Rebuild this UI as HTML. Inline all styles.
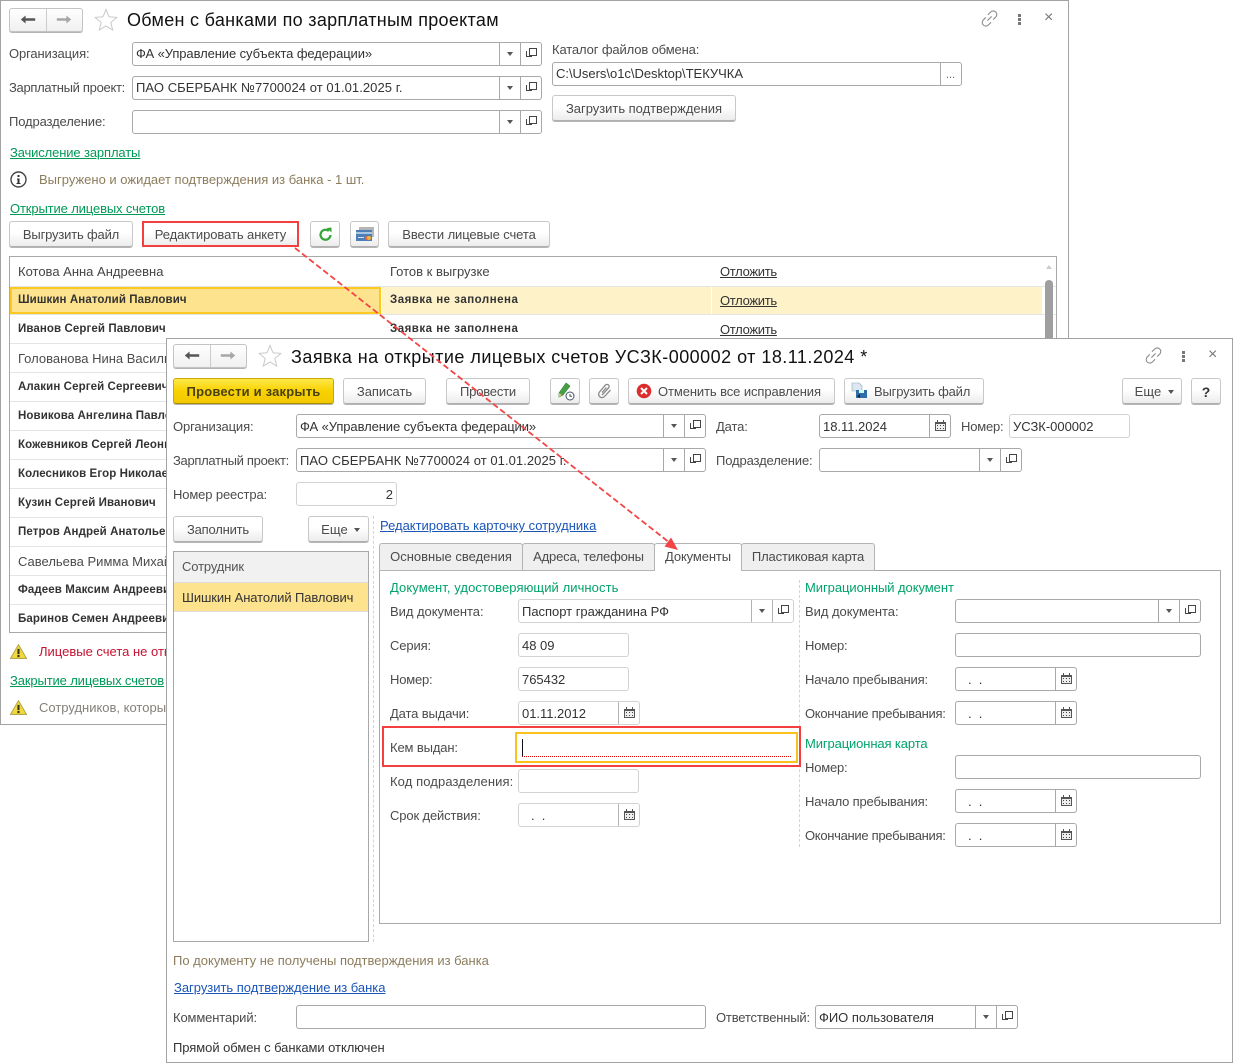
<!DOCTYPE html>
<html lang="ru"><head><meta charset="utf-8"><title>Обмен с банками</title>
<style>
html,body{margin:0;padding:0;background:#fff}
body{position:relative;width:1233px;height:1063px;overflow:hidden;font-family:"Liberation Sans",sans-serif;font-size:13px;letter-spacing:-.13px;color:#4b4b4b}
.w{position:absolute;box-sizing:border-box;background:#fff;border:1px solid #a3a3a3;overflow:hidden}
.t{position:absolute;white-space:nowrap;line-height:16px}
.g{color:#009a57;text-decoration:underline}
.bl{color:#1a55b8;text-decoration:underline;letter-spacing:-.02px}
.h{color:#00a36a;letter-spacing:-.06px}
.br{color:#8c7c5c;letter-spacing:0}
.f{position:absolute;box-sizing:border-box;height:24px;border:1px solid #a8a8a8;border-radius:3px;background:#fff;line-height:22px;padding-left:3px;color:#333;white-space:nowrap;letter-spacing:-.02px}
.w2 .f{line-height:24px}
.f.l{border-color:#d2d2d2}
.d,.o,.c,.e{position:absolute;top:0;bottom:0;width:20px;border-left:1px solid #a8a8a8}
.l .d,.l .o,.l .c{border-color:#b4b4b4}
.d{right:21px}.o{right:0}.c{right:0}.e{right:0;text-align:center;color:#666}
.d:after{content:"";position:absolute;left:7px;top:9px;border:3px solid transparent;border-top:4px solid #555;border-bottom:0}
.o:before{content:"";position:absolute;left:8px;top:5px;width:6px;height:6px;border:1px solid #444;background:#fff;z-index:1}
.o:after{content:"";position:absolute;left:5px;top:8px;width:5px;height:5px;border-left:1px solid #444;border-bottom:1px solid #444}
.c svg{position:absolute;left:5px;top:5px}
.b{position:absolute;box-sizing:border-box;height:26px;border:1px solid #c8c8c8;border-bottom-color:#b0b0b0;border-radius:3px;background:linear-gradient(#fff,#fff 45%,#ececec);box-shadow:0 1px 0 #b5b5b5;text-align:center;line-height:26px;white-space:nowrap;color:#4b4b4b;letter-spacing:-.1px}
.n{position:absolute;box-sizing:border-box;width:74px;height:24px;border:1px solid #c4c4c4;border-radius:3px;background:linear-gradient(#fff,#f0f0f0);box-shadow:0 1px 0 #b5b5b5}
.n i{position:absolute;left:36px;top:0;bottom:0;border-left:1px solid #ccc}
.r{position:absolute;left:0;right:0;height:1px;background:#e4e4e4}
.nm{position:absolute;white-space:nowrap;font-weight:bold;font-size:11.5px;letter-spacing:.1px;color:#333;line-height:16px;margin-top:1px}
.z{letter-spacing:.5px}
.u{color:#333;text-decoration:underline;letter-spacing:-.3px}
.a{position:absolute}
.tab{position:absolute;box-sizing:border-box;height:28px;border:1px solid #b4b4b4;border-radius:3px 3px 0 0;background:#efefef;text-align:center;line-height:26px;white-space:nowrap}
</style></head><body>
<svg width="0" height="0" style="position:absolute"><defs>
<symbol id="cal" viewBox="0 0 11 11"><path d="M0 2h11v9H0z" fill="#555"/><path d="M2 0h1v3H2zM8 0h1v3H8z" fill="#555"/><path d="M1 4h9v6H1z" fill="#eee"/><path d="M2 5h1v1H2zM5 5h1v1H5zM8 5h1v1H8zM2 8h1v1H2zM5 8h1v1H5zM8 8h1v1H8z" fill="#444"/></symbol>
<symbol id="star" viewBox="0 0 24 24"><path d="M12 1.500l3 7.300 7.800.6-6 5.100 1.900 7.600L12 18l-6.700 4.100 1.900-7.600-6-5.100 7.800-.6z" fill="#fff" stroke="#c9c9c9"/></symbol>
<symbol id="la" viewBox="0 0 20 12"><path d="M1 6l6-5v3.500h12v3H7v3.500z" fill="#555"/></symbol>
<symbol id="ra" viewBox="0 0 20 12"><path d="M19 6l-6-5v3.500H1v3h12v3.500z" fill="#a6a6a6"/></symbol>
<symbol id="lnk" viewBox="0 0 16 16"><path d="M6 10l4-4M6.500 4.500l2.500-2.500a3 3 0 0 1 5 4.500l-2.500 2.500M9.500 11.500l-2.500 2.500a3 3 0 0 1-5-4.500l2.500-2.500" fill="none" stroke="#8a8a8a"/></symbol>
<symbol id="warn" viewBox="0 0 16 14"><path d="M8 .5l7.500 13H.5z" fill="#f3d93a" stroke="#b5a850"/><path d="M7 4.500h2v5H7zM7 10.300h2v2H7z" fill="#333"/></symbol>
</defs></svg>

<!-- WINDOW 1 -->
<div class="w" style="left:0;top:0;width:1069px;height:725px">
<div style="position:absolute;left:-1px;top:-1px;width:1069px;height:725px">
<div class="n" style="left:9px;top:8px"><i></i><svg class="a" style="left:10px;top:5px" width="16" height="11"><use href="#la"/></svg><svg class="a" style="left:46px;top:5px" width="16" height="11"><use href="#ra"/></svg></div>
<svg class="a" style="left:94px;top:8px" width="24" height="24"><use href="#star"/></svg>
<div class="t" style="left:127px;top:10px;font-size:18px;line-height:20px;color:#111;letter-spacing:.3px">Обмен с банками по зарплатным проектам</div>
<svg class="a" style="left:981px;top:10px" width="17" height="17"><use href="#lnk"/></svg>
<div class="a" style="left:1018px;top:14px;width:3px;height:3px;background:#777;box-shadow:0 4px 0 #777,0 8px 0 #777"></div>
<div class="t" style="left:1044px;top:10px;font-size:16px;color:#777;letter-spacing:0">×</div>

<div class="t" style="left:9px;top:46px">Организация:</div>
<div class="f" style="left:132px;top:42px;width:410px;letter-spacing:-.09px">ФА «Управление субъекта федерации»<i class="d"></i><i class="o"></i></div>
<div class="t" style="left:9px;top:80px;letter-spacing:-.3px">Зарплатный проект:</div>
<div class="f" style="left:132px;top:76px;width:410px;letter-spacing:.06px">ПАО СБЕРБАНК №7700024 от 01.01.2025 г.<i class="d"></i><i class="o"></i></div>
<div class="t" style="left:9px;top:114px">Подразделение:</div>
<div class="f" style="left:132px;top:110px;width:410px"><i class="d"></i><i class="o"></i></div>

<div class="t" style="left:552px;top:42px">Каталог файлов обмена:</div>
<div class="f" style="left:552px;top:62px;width:410px">C:\Users\o1c\Desktop\ТЕКУЧКА<i class="e" style="line-height:24px;font-size:11px;letter-spacing:0">...</i></div>
<div class="b" style="left:552px;top:95px;width:184px;letter-spacing:-.03px">Загрузить подтверждения</div>

<div class="t g" style="left:10px;top:145px">Зачисление зарплаты</div>
<svg class="a" style="left:10px;top:171px" width="17" height="17"><circle cx="8.500" cy="8.500" r="7.500" fill="#fff" stroke="#444" stroke-width="1.400"/><path d="M7.500 4h2v2h-2zM7 7.500h2.500v4.500h1v1h-4v-1h1v-3.500h-.5z" fill="#333"/></svg>
<div class="t br" style="left:39px;top:172px">Выгружено и ожидает подтверждения из банка - 1 шт.</div>
<div class="t g" style="left:10px;top:201px">Открытие лицевых счетов</div>

<div class="b" style="left:9px;top:221px;width:124px;letter-spacing:-.18px">Выгрузить файл</div>
<div class="b" style="left:142px;top:221px;width:157px;border:2px solid #f33f3f;border-radius:0;box-shadow:none;line-height:23px;letter-spacing:-.08px">Редактировать анкету</div>
<div class="b" style="left:310px;top:221px;width:30px"><svg class="a" style="left:7px;top:5px" width="15" height="15" viewBox="0 0 15 15"><path d="M12.500 8a5 5 0 1 1-1.700-4" fill="none" stroke="#35a53a" stroke-width="2.200"/><path d="M8.500 1l5-.5v5z" fill="#35a53a"/></svg></div>
<div class="b" style="left:350px;top:221px;width:29px"><svg class="a" style="left:5px;top:5px" width="18" height="15" viewBox="0 0 18 15"><path d="M3 0h15v10H3z" fill="#b5b5b5"/><path d="M0 3h16v11H0z" fill="#4c7fb5"/><path d="M0 5h16v2H0z" fill="#a9c6e3"/><path d="M2 10h6v1H2z" fill="#dde"/><circle cx="11" cy="11" r="2" fill="#e8623a"/><circle cx="13" cy="11" r="2" fill="#f2b33a"/></svg></div>
<div class="b" style="left:388px;top:221px;width:162px">Ввести лицевые счета</div>

<!-- table -->
<div class="a" style="left:9px;top:256px;width:1048px;height:377px;box-sizing:border-box;border:1px solid #a8a8a8;overflow:hidden;background:#fff">
<div style="position:absolute;left:-10px;top:-257px;width:1060px;height:640px">
<div class="r" style="top:286px"></div><div class="r" style="top:314px"></div><div class="r" style="top:343px"></div><div class="r" style="top:372px"></div><div class="r" style="top:401px"></div><div class="r" style="top:430px"></div><div class="r" style="top:459px"></div><div class="r" style="top:488px"></div><div class="r" style="top:517px"></div><div class="r" style="top:546px"></div><div class="r" style="top:575px"></div><div class="r" style="top:604px"></div>
<div class="a" style="left:382px;top:287px;width:660px;height:27px;background:#fef2c8"></div>
<div class="a" style="left:711px;top:287px;width:1px;height:27px;background:#fff"></div>
<div class="a" style="left:10px;top:287px;width:371px;height:27px;box-sizing:border-box;background:#fde38d;border:2px solid #fdc91f"></div>
<div class="t" style="left:18px;top:264px;color:#444;letter-spacing:0">Котова Анна Андреевна</div>
<div class="t" style="left:390px;top:264px;color:#444;letter-spacing:0">Готов к выгрузке</div>
<div class="t u" style="left:720px;top:264px">Отложить</div>
<div class="nm" style="left:18px;top:291px">Шишкин Анатолий Павлович</div>
<div class="nm z" style="left:390px;top:291px">Заявка не заполнена</div>
<div class="t u" style="left:720px;top:293px">Отложить</div>
<div class="nm" style="left:18px;top:320px">Иванов Сергей Павлович</div>
<div class="nm z" style="left:390px;top:320px">Заявка не заполнена</div>
<div class="t u" style="left:720px;top:322px">Отложить</div>
<div class="t" style="left:18px;top:351px;letter-spacing:0">Голованова Нина Васильевна</div>
<div class="nm" style="left:18px;top:378px">Алакин Сергей Сергеевич</div>
<div class="nm" style="left:18px;top:407px">Новикова Ангелина Павловна</div>
<div class="nm" style="left:18px;top:436px">Кожевников Сергей Леонидович</div>
<div class="nm" style="left:18px;top:465px">Колесников Егор Николаевич</div>
<div class="nm" style="left:18px;top:494px">Кузин Сергей Иванович</div>
<div class="nm" style="left:18px;top:523px">Петров Андрей Анатольевич</div>
<div class="t" style="left:18px;top:554px;letter-spacing:0">Савельева Римма Михайловна</div>
<div class="nm" style="left:18px;top:581px">Фадеев Максим Андреевич</div>
<div class="nm" style="left:18px;top:610px">Баринов Семен Андреевич</div>
<div class="a" style="left:1046px;top:265px;border:3px solid transparent;border-bottom:4px solid #ccc;border-top:0"></div>
<div class="a" style="left:1045px;top:280px;width:8px;height:70px;border-radius:4px 4px 0 0;background:#9f9f9f"></div>
</div></div>

<svg class="a" style="left:10px;top:644px" width="17" height="15"><use href="#warn"/></svg>
<div class="t" style="left:39px;top:644px;color:#c41230;letter-spacing:0">Лицевые счета не открыты</div>
<div class="t g" style="left:10px;top:673px">Закрытие лицевых счетов</div>
<svg class="a" style="left:10px;top:700px" width="17" height="15"><use href="#warn"/></svg>
<div class="t br" style="left:39px;top:700px;color:#85807a">Сотрудников, которые</div>
</div></div>

<!-- WINDOW 2 -->
<div class="w w2" style="left:166px;top:338px;width:1067px;height:725px">
<div style="position:absolute;left:-167px;top:-339px;width:1233px;height:1063px">
<div class="n" style="left:173px;top:344px"><i></i><svg class="a" style="left:10px;top:5px" width="16" height="11"><use href="#la"/></svg><svg class="a" style="left:46px;top:5px" width="16" height="11"><use href="#ra"/></svg></div>
<svg class="a" style="left:258px;top:344px" width="24" height="24"><use href="#star"/></svg>
<div class="t" style="left:291px;top:347px;font-size:18px;line-height:20px;color:#111;letter-spacing:.47px">Заявка на открытие лицевых счетов УСЗК-000002 от 18.11.2024 *</div>
<svg class="a" style="left:1145px;top:347px" width="17" height="17"><use href="#lnk"/></svg>
<div class="a" style="left:1182px;top:351px;width:3px;height:3px;background:#777;box-shadow:0 4px 0 #777,0 8px 0 #777"></div>
<div class="t" style="left:1208px;top:347px;font-size:16px;color:#777;letter-spacing:0">×</div>

<div class="b" style="left:173px;top:378px;width:161px;border-color:#c9a800;border-bottom-color:#a98e00;background:linear-gradient(#ffe84a,#f8d200 50%,#f3c800);font-weight:bold;color:#4a4116;letter-spacing:.2px">Провести и закрыть</div>
<div class="b" style="left:343px;top:378px;width:83px;letter-spacing:-.05px">Записать</div>
<div class="b" style="left:446px;top:378px;width:84px;letter-spacing:-.2px">Провести</div>
<div class="b" style="left:550px;top:378px;width:30px"><svg class="a" style="left:6px;top:3px" width="18" height="19" viewBox="0 0 18 19"><path d="M9 1l4 3-7 9-4 2 0-4z" fill="#46a045" stroke="#2d7a2d" stroke-width=".6"/><path d="M2 11l3 2-3 2z" fill="#e9c27a"/><circle cx="13" cy="14" r="4" fill="#fff" stroke="#456" stroke-width="1"/><path d="M13 12v2.300h2" fill="none" stroke="#456"/></svg></div>
<div class="b" style="left:589px;top:378px;width:30px"><svg class="a" style="left:7px;top:4px" width="16" height="16" viewBox="0 0 16 16"><path d="M5 12l6.500-7a2 2 0 0 0-3-3L2.500 9a3.300 3.300 0 0 0 5 4.500L13.500 7M5 9.500l4.500-5" fill="none" stroke="#888" stroke-width="1.300"/></svg></div>
<div class="b" style="left:628px;top:378px;width:207px;padding-left:29px;text-align:left"><svg class="a" style="left:7px;top:4px" width="16" height="16" viewBox="0 0 16 16"><circle cx="8" cy="8" r="7.300" fill="#dc2c2c"/><path d="M5 5l6 6M11 5l-6 6" stroke="#fff" stroke-width="2"/></svg>Отменить все исправления</div>
<div class="b" style="left:844px;top:378px;width:140px;padding-left:29px;text-align:left;letter-spacing:-.18px"><svg class="a" style="left:6px;top:3px" width="18" height="18" viewBox="0 0 18 18"><path d="M1 1h7l3 3v5H1z" fill="#dde6f2" stroke="#8aa" stroke-width=".6"/><path d="M5 8h11v8H5z" fill="#2f6ea8"/><path d="M8 8h5v3H8z" fill="#cfe"/><path d="M6 14l3-2v4z" fill="#222"/></svg>Выгрузить файл</div>
<div class="b" style="left:1122px;top:378px;width:60px;padding-right:8px;letter-spacing:.1px">Еще<span class="a" style="left:45px;top:11px;border:3px solid transparent;border-top:4px solid #555;border-bottom:0"></span></div>
<div class="b" style="left:1191px;top:378px;width:30px;font-weight:bold;font-size:14px;color:#333">?</div>

<div class="t" style="left:173px;top:419px">Организация:</div>
<div class="f" style="left:296px;top:414px;width:410px;letter-spacing:-.09px">ФА «Управление субъекта федерации»<i class="d"></i><i class="o"></i></div>
<div class="t" style="left:173px;top:453px;letter-spacing:-.3px">Зарплатный проект:</div>
<div class="f" style="left:296px;top:448px;width:410px;letter-spacing:.06px">ПАО СБЕРБАНК №7700024 от 01.01.2025 г.<i class="d"></i><i class="o"></i></div>
<div class="t" style="left:173px;top:487px">Номер реестра:</div>
<div class="f l" style="left:296px;top:482px;width:101px;text-align:right;padding-right:3px">2</div>

<div class="t" style="left:716px;top:419px">Дата:</div>
<div class="f" style="left:819px;top:414px;width:132px">18.11.2024<i class="c"><svg width="11" height="11"><use href="#cal"/></svg></i></div>
<div class="t" style="left:961px;top:419px;letter-spacing:-.2px">Номер:</div>
<div class="f l" style="left:1009px;top:414px;width:121px">УСЗК-000002</div>
<div class="t" style="left:716px;top:453px">Подразделение:</div>
<div class="f" style="left:819px;top:448px;width:203px"><i class="d"></i><i class="o"></i></div>

<div class="b" style="left:173px;top:516px;width:90px;letter-spacing:-.2px">Заполнить</div>
<div class="b" style="left:308px;top:516px;width:61px;padding-right:8px;letter-spacing:.1px">Еще<span class="a" style="left:45px;top:11px;border:3px solid transparent;border-top:4px solid #555;border-bottom:0"></span></div>
<div class="a" style="left:373px;top:516px;height:426px;border-left:1px dashed #d4d4d4"></div>
<div class="t bl" style="left:380px;top:518px">Редактировать карточку сотрудника</div>

<div class="a" style="left:173px;top:551px;width:196px;height:391px;box-sizing:border-box;border:1px solid #a8a8a8;background:#fff">
<div class="a" style="left:0;top:0;width:194px;height:30px;background:#f1f1f1;border-bottom:1px solid #ddd"></div>
<div class="a" style="left:0;top:31px;width:194px;height:28px;background:#fde38d;border-bottom:1px solid #ddd"></div>
<div class="t" style="left:8px;top:7px;color:#555">Сотрудник</div>
<div class="t" style="left:8px;top:38px;color:#333;letter-spacing:-.1px">Шишкин Анатолий Павлович</div>
</div>

<!-- tabs -->
<div class="a" style="left:379px;top:570px;width:842px;height:354px;box-sizing:border-box;border:1px solid #a8a8a8;background:#fff"></div>
<div class="tab" style="left:379px;top:543px;width:144px;letter-spacing:0">Основные сведения</div>
<div class="tab" style="left:522px;top:543px;width:133px;letter-spacing:-.18px">Адреса, телефоны</div>
<div class="tab" style="left:654px;top:543px;width:88px;border-bottom:0;background:#fff;letter-spacing:-.12px">Документы</div>
<div class="tab" style="left:741px;top:543px;width:134px;letter-spacing:-.15px">Пластиковая карта</div>

<div class="a" style="left:799px;top:580px;height:267px;border-left:1px dashed #d4d4d4"></div>

<div class="t h" style="left:390px;top:580px;letter-spacing:.08px">Документ, удостоверяющий личность</div>
<div class="t" style="left:390px;top:604px;letter-spacing:-.04px">Вид документа:</div>
<div class="f l" style="left:518px;top:599px;width:276px">Паспорт гражданина РФ<i class="d"></i><i class="o"></i></div>
<div class="t" style="left:390px;top:638px">Серия:</div>
<div class="f l" style="left:518px;top:633px;width:111px">48 09</div>
<div class="t" style="left:390px;top:672px;letter-spacing:-.2px">Номер:</div>
<div class="f l" style="left:518px;top:667px;width:111px">765432</div>
<div class="t" style="left:390px;top:706px">Дата выдачи:</div>
<div class="f l" style="left:518px;top:701px;width:122px">01.11.2012<i class="c"><svg width="11" height="11"><use href="#cal"/></svg></i></div>
<div class="a" style="left:382px;top:726px;width:419px;height:41px;box-sizing:border-box;border:2px solid #f33f3f"></div>
<div class="a" style="left:515px;top:732px;width:283px;height:31px;box-sizing:border-box;border:2px solid #fbc11d"></div>
<div class="a" style="left:522px;top:739px;width:1px;height:17px;background:#111"></div>
<div class="a" style="left:522px;top:756px;width:269px;border-top:1px dotted #e00000"></div>
<div class="t" style="left:390px;top:740px">Кем выдан:</div>
<div class="t" style="left:390px;top:774px;letter-spacing:.1px">Код подразделения:</div>
<div class="f l" style="left:518px;top:769px;width:121px"></div>
<div class="t" style="left:390px;top:808px">Срок действия:</div>
<div class="f l" style="left:518px;top:803px;width:122px;padding-left:12px"> .&nbsp; .<i class="c"><svg width="11" height="11"><use href="#cal"/></svg></i></div>

<div class="t h" style="left:805px;top:580px">Миграционный документ</div>
<div class="t" style="left:805px;top:604px;letter-spacing:-.04px">Вид документа:</div>
<div class="f" style="left:955px;top:599px;width:246px"><i class="d"></i><i class="o"></i></div>
<div class="t" style="left:805px;top:638px;letter-spacing:-.2px">Номер:</div>
<div class="f" style="left:955px;top:633px;width:246px"></div>
<div class="t" style="left:805px;top:672px;letter-spacing:-.18px">Начало пребывания:</div>
<div class="f" style="left:955px;top:667px;width:122px;padding-left:12px">.&nbsp; .<i class="c"><svg width="11" height="11"><use href="#cal"/></svg></i></div>
<div class="t" style="left:805px;top:706px;letter-spacing:-.3px">Окончание пребывания:</div>
<div class="f" style="left:955px;top:701px;width:122px;padding-left:12px">.&nbsp; .<i class="c"><svg width="11" height="11"><use href="#cal"/></svg></i></div>
<div class="t h" style="left:805px;top:736px;letter-spacing:-.12px">Миграционная карта</div>
<div class="t" style="left:805px;top:760px;letter-spacing:-.2px">Номер:</div>
<div class="f" style="left:955px;top:755px;width:246px"></div>
<div class="t" style="left:805px;top:794px;letter-spacing:-.18px">Начало пребывания:</div>
<div class="f" style="left:955px;top:789px;width:122px;padding-left:12px">.&nbsp; .<i class="c"><svg width="11" height="11"><use href="#cal"/></svg></i></div>
<div class="t" style="left:805px;top:828px;letter-spacing:-.3px">Окончание пребывания:</div>
<div class="f" style="left:955px;top:823px;width:122px;padding-left:12px">.&nbsp; .<i class="c"><svg width="11" height="11"><use href="#cal"/></svg></i></div>

<div class="t br" style="left:173px;top:953px">По документу не получены подтверждения из банка</div>
<div class="t bl" style="left:174px;top:980px">Загрузить подтверждение из банка</div>
<div class="t" style="left:173px;top:1010px">Комментарий:</div>
<div class="f" style="left:296px;top:1005px;width:410px"></div>
<div class="t" style="left:716px;top:1010px;letter-spacing:-.18px">Ответственный:</div>
<div class="f" style="left:815px;top:1005px;width:203px">ФИО пользователя<i class="d"></i><i class="o"></i></div>
<div class="t" style="left:173px;top:1040px;color:#333;letter-spacing:-.06px">Прямой обмен с банками отключен</div>
</div></div>

<svg class="a" style="left:0;top:0;pointer-events:none" width="1233" height="1063"><line x1="295" y1="248" x2="670" y2="543" stroke="#f34545" stroke-width="1.800" stroke-dasharray="6 3"/><path d="M678 550l-13.500-3.500 6.500-9z" fill="#f34545"/></svg>
</body></html>
